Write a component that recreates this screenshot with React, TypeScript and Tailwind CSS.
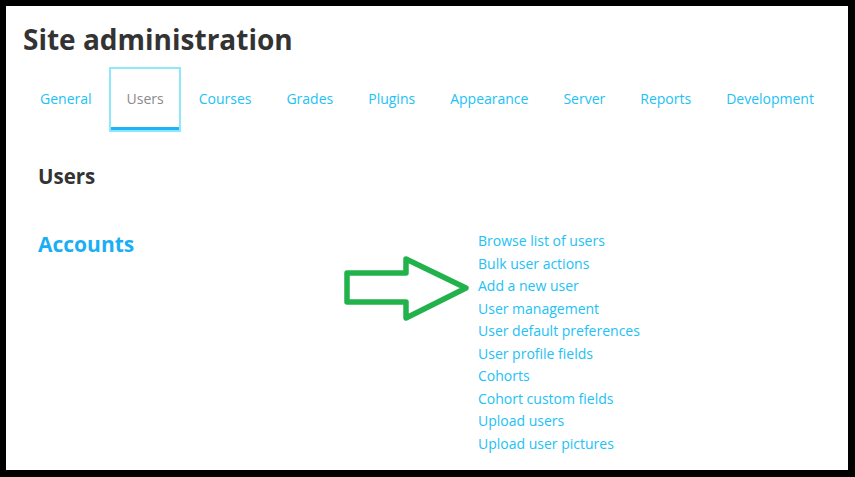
import React from "react";

const tabs = [
  "General",
  "Users",
  "Courses",
  "Grades",
  "Plugins",
  "Appearance",
  "Server",
  "Reports",
  "Development",
];

const accountLinks = [
  "Browse list of users",
  "Bulk user actions",
  "Add a new user",
  "User management",
  "User default preferences",
  "User profile fields",
  "Cohorts",
  "Cohort custom fields",
  "Upload users",
  "Upload user pictures",
];

export default function App() {
  return (
    <div
      className="relative w-[855px] h-[477px] bg-black pt-[6px] pl-[6px] pr-[7px] pb-[7px]"
      style={{ fontFamily: '"Open Sans", "Noto Sans", sans-serif' }}
    >
      <div className="w-full h-full bg-white overflow-hidden">
        {/* Page title */}
        <h1 className="pt-[15px] pl-[17px] text-[28px] leading-[36px] font-bold text-[#333333]">
          Site administration
        </h1>

        {/* Tab row */}
        <div className="flex mt-[10px] pl-[16.5px]">
          {tabs.map((tab) => {
            const active = tab === "Users";
            return (
              <div
                key={tab}
                className={`border-2 ${active ? "border-[#8fe7fb]" : "border-transparent"}`}
              >
                <div
                  className={`px-[15.5px] pt-[19px] pb-[17px] border-b-[3px] text-[14px] leading-[22px] ${
                    active
                      ? "border-[#1fb2fc] text-[#8a8a8a]"
                      : "border-transparent text-[#22c1f6]"
                  }`}
                >
                  {tab}
                </div>
              </div>
            );
          })}
        </div>

        {/* Users section */}
        <div className="pl-[32px]">
          <h2 className="mt-[30px] text-[20.5px] leading-[28px] font-bold text-[#333333]">Users</h2>

          <div className="flex mt-[40px]">
            <h3 className="w-[440px] shrink-0 text-[21px] leading-[28px] font-bold text-[#1aaef5]">
              Accounts
            </h3>
            <ul>
              {accountLinks.map((link) => (
                <li key={link} className="text-[14px] leading-[22.5px] text-[#22c1f6]">
                  {link}
                </li>
              ))}
            </ul>
          </div>
        </div>
      </div>

      {/* Green annotation arrow */}
      <svg
        className="absolute left-0 top-0 pointer-events-none"
        width="855"
        height="477"
        viewBox="0 0 855 477"
      >
        <polygon
          points="347,273 406,273 406,259 466,288 406,318 406,302 347,302"
          fill="none"
          stroke="#22b24c"
          strokeWidth="5.5"
          strokeLinejoin="round"
        />
      </svg>
    </div>
  );
}
